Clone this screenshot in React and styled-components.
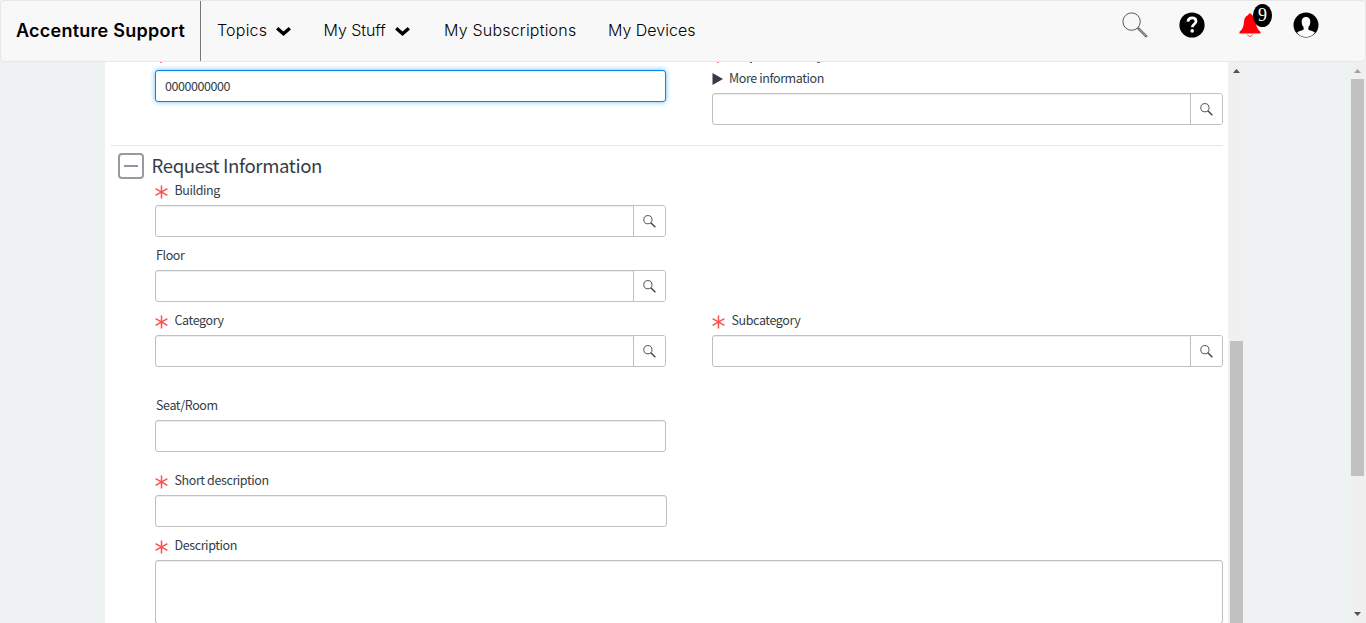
import React from 'react';
import styled, { createGlobalStyle } from 'styled-components';

const GlobalStyle = createGlobalStyle`
  *, *::before, *::after { box-sizing: border-box; }
  html, body { margin: 0; height: 100%; overflow: hidden; }
  body { font-family: "Noto Sans CJK JP", "Noto Sans", sans-serif; color: #343d47; background: #eef2f3; }
  svg { display: block; }
`;

const Page = styled.div`
  width: 1366px;
  height: 623px;
  display: flex;
  flex-direction: column;
  overflow: hidden;
`;

const Header = styled.header`
  flex: none;
  height: 62px;
  display: flex;
  border: 1px solid #e7e7e7;
  border-radius: 4px;
  background: #f8f8f8;
  font-family: Inter, "Liberation Sans", sans-serif;
  color: #000;
`;

const Brand = styled.div`
  width: 200px;
  padding-left: 15px;
  line-height: 59px;
  border-right: 1px solid #777;
  font-size: 18px;
  font-weight: 600;
  letter-spacing: 0.25px;
  white-space: nowrap;
`;

const Nav = styled.nav`
  flex: 1;
  display: flex;
  padding-left: 16px;
`;

const NavItem = styled.a`
  width: ${(p) => p.$width}px;
  display: flex;
  align-items: center;
  gap: 9px;
  height: 58px;
  font-size: 16px;
  font-weight: 300;
  letter-spacing: ${(p) => p.$spacing}px;
  white-space: nowrap;
  svg { margin-top: 3px; }
`;

const Tools = styled.div`
  display: flex;
  gap: 32px;
  padding: 11px 47px 0 0;
`;

const Tool = styled.span`
  position: relative;
  width: 25px;
  height: 26px;
  padding: ${(p) => p.$inset || '0'};
`;

const Badge = styled.span`
  position: absolute;
  left: 17px;
  top: -8px;
  width: 19px;
  height: 23px;
  border-radius: 50%;
  background: #000;
  color: #fff;
  font: 18px/22px "Liberation Serif", serif;
  text-align: center;
`;

const Body = styled.div`
  flex: 1;
  min-height: 0;
  display: flex;
`;

const Panel = styled.main`
  width: 1123px;
  margin-left: 105px;
  background: #fff;
  overflow: hidden;
`;

const ClippedRow = styled.div`
  height: 1px;
  display: flex;
  padding-left: 55px;
`;

const Mark = styled.i`
  width: ${(p) => p.$width}px;
  margin-left: ${(p) => p.$gap}px;
  background: ${(p) => p.$color};
`;

const Columns = styled.div`
  display: grid;
  grid-template-columns: 511px 511px;
  column-gap: 46px;
  padding-left: 50px;
  padding-top: ${(p) => p.$top || 0}px;
`;

const Field = styled.div`
  width: ${(p) => p.$width || 511}px;
`;

const Label = styled.label`
  display: flex;
  align-items: center;
  height: 25px;
  padding-bottom: 6px;
  padding-left: ${(p) => (p.$required ? 0 : 1)}px;
  font-size: 12.5px;
  line-height: 19px;
  letter-spacing: -0.4px;
  white-space: nowrap;
  svg { margin: 4px 6.5px 0 0; }
`;

const MoreInfo = styled.div`
  display: flex;
  align-items: center;
  height: 30px;
  gap: 6px;
  padding-bottom: 2px;
  font-size: 12.5px;
  letter-spacing: -0.4px;
  white-space: nowrap;
  svg { margin-top: 3px; }
`;

const Box = styled.div`
  display: flex;
  justify-content: flex-end;
  height: ${(p) => p.$height || 32}px;
  border: 1px solid #bdc0c4;
  border-radius: 3px;
  background: #fff;
  box-shadow: inset 0 1px 1px rgba(0, 0, 0, 0.075);
`;

const FocusedBox = styled(Box)`
  justify-content: flex-start;
  margin-top: 7px;
  padding-left: 9px;
  border-color: #0b86e8;
  box-shadow: inset 0 1px 1px rgba(0, 0, 0, 0.075), 0 0 5px rgba(16, 143, 240, 0.65);
  font-size: 12.5px;
  letter-spacing: -0.43px;
  line-height: 29px;
`;

const Lookup = styled.span`
  width: 32px;
  display: flex;
  align-items: center;
  justify-content: center;
  padding-right: 1px;
  border-left: 1px solid #bdc0c4;
  background: #fff;
  border-radius: 0 2px 2px 0;
`;

const Divider = styled.hr`
  height: 1px;
  margin: 20px 5px 0;
  border: 0;
  background: #e6e8ea;
`;

const SectionHead = styled.div`
  display: flex;
  align-items: center;
  gap: 8px;
  height: 34px;
  padding: 5px 0 0 12.5px;
`;

const Title = styled.h2`
  margin: 0 0 2px;
  font-size: 18.6px;
  line-height: 24px;
  font-weight: 400;
  letter-spacing: -0.38px;
  white-space: nowrap;
`;

const Toggle = styled.span`
  flex: none;
  width: 26px;
  height: 26px;
  display: flex;
  align-items: center;
  justify-content: center;
  border: 2px solid #959ba1;
  border-radius: 4px;
  &::before { content: ''; width: 14px; height: 2px; background: #8f959b; }
`;

const Rail = styled.div`
  width: 17px;
  display: flex;
  flex-direction: column;
  align-items: center;
  background: #f0f0f0;
  margin-left: ${(p) => p.$gap || 0}px;
`;

const Arrow = styled.svg`
  flex: none;
  margin: ${(p) => p.$margin};
`;

const Thumb = styled.div`
  width: 13px;
  height: ${(p) => p.$height}px;
  margin-top: ${(p) => p.$top}px;
  flex: none;
  background: #c1c1c1;
`;

const Chevron = () => (
  <svg width="15" height="11" viewBox="0 0 15 11">
    <path d="M1.2 2.3 7.5 7.8l6.3-5.5" fill="none" stroke="#000" strokeWidth="3.4" />
  </svg>
);

const Star = () => (
  <svg width="13" height="14" viewBox="0 0 13 14">
    <path d="M6.5.5v13M.6 3.7l11.8 6.6M12.4 3.7.6 10.3" stroke="#ff5050" strokeWidth="1.5" fill="none" />
  </svg>
);

const Glass = () => (
  <svg width="13" height="13" viewBox="0 0 13 13">
    <circle cx="4.9" cy="4.7" r="4.1" fill="none" stroke="#4b535b" strokeWidth="1" />
    <path d="m7.8 7.7 4.6 4.6" stroke="#3d464f" strokeWidth="1.4" />
  </svg>
);

const ScrollArrow = ({ down, color, margin }) => (
  <Arrow width="7" height="4" viewBox="0 0 7 4" $margin={margin}>
    <path d={down ? 'M0 0h7L3.5 4z' : 'M0 4h7L3.5 0z'} fill={color} />
  </Arrow>
);

const LookupBox = () => (
  <Box><Lookup><Glass /></Lookup></Box>
);

const FormField = ({ label, required, width, children }) => (
  <Field $width={width}>
    <Label $required={required}>{required && <Star />}{label}</Label>
    {children}
  </Field>
);

export default function App() {
  return (
    <Page>
      <GlobalStyle />
      <Header>
        <Brand>Accenture Support</Brand>
        <Nav>
          <NavItem $width={106.5} $spacing={0.2}>Topics <Chevron /></NavItem>
          <NavItem $width={120.5} $spacing={-0.05}>My Stuff <Chevron /></NavItem>
          <NavItem $width={164} $spacing={0.2}>My Subscriptions</NavItem>
          <NavItem $width={100} $spacing={0}>My Devices</NavItem>
        </Nav>
        <Tools>
          <Tool>
            <svg width="26" height="26" viewBox="0 0 26 26">
              <circle cx="9.6" cy="9.6" r="8.7" fill="none" stroke="#52585e" strokeWidth="1" />
              <path d="m15.8 15.9 9 9" stroke="#60676e" strokeWidth="2.6" />
              <path d="m16.6 16.7 7.5 7.5" stroke="#9fb4c4" strokeWidth="1" />
            </svg>
          </Tool>
          <Tool>
            <svg width="26" height="26" viewBox="0 0 26 26">
              <circle cx="13" cy="13" r="12.6" />
              <path d="M8.9 9.6C9.2 7 10.8 5.9 13.1 5.9c2.3 0 3.9 1.3 3.9 3.3 0 3-3.7 3.1-3.7 6" fill="none" stroke="#fff" strokeWidth="2.7" />
              <circle cx="13.2" cy="18.9" r="1.8" fill="#fff" />
            </svg>
          </Tool>
          <Tool $inset="1px 0 0 3px">
            <svg width="22" height="26" viewBox="0 0 22 26">
              <path d="M11 .5c1.100 0 1.700.600 1.800 1.400 2.600.8 3.900 3.300 4.200 6.700.4 4.800 1.100 7.600 4.500 10.200v1.700H.5v-1.700c3.400-2.600 4.100-5.400 4.500-10.200.3-3.400 1.600-5.900 4.200-6.700C9.300 1.100 9.900.5 11 .5z" fill="#ff0008" />
              <path d="M8.500 21.300a2.600 2.900 0 0 0 5 0" fill="#fff" stroke="#ff4a50" strokeWidth="1" />
            </svg>
            <Badge>9</Badge>
          </Tool>
          <Tool>
            <svg width="26" height="26" viewBox="0 0 26 26">
              <circle cx="13" cy="13" r="12.500" />
              <path d="M13 5c3 0 4.500 2.200 4.300 5.200-.1 2.300-.9 3.800-1.900 4.800v2.500c.8 1.200 5.200 1.300 6.600 3.300A12 12 0 0 1 13 25a12 12 0 0 1-9-4.200c1.400-2 5.800-2.100 6.600-3.300V15c-1-1-1.800-2.500-1.900-4.800C8.500 7.200 10 5 13 5z" fill="#fff" />
            </svg>
          </Tool>
        </Tools>
      </Header>
      <Body>
        <Panel>
          <ClippedRow>
            <Mark $width={2} $gap={0} $color="#ff8080" />
            <Mark $width={2} $gap={555} $color="#ff8080" />
            <Mark $width={2} $gap={31} $color="#55558a" />
            <Mark $width={3} $gap={65} $color="#66668f" />
          </ClippedRow>
          <Columns>
            <FocusedBox>0000000000</FocusedBox>
            <div>
              <MoreInfo>
                <svg width="11" height="12" viewBox="0 0 11 12"><path d="M.5 0 11 6 .5 12z" fill="#343d47" /></svg>
                More information
              </MoreInfo>
              <LookupBox />
            </div>
          </Columns>
          <Divider />
          <SectionHead><Toggle /><Title>Request Information</Title></SectionHead>
          <Columns>
            <FormField label="Building" required><LookupBox /></FormField>
          </Columns>
          <Columns $top={8}>
            <FormField label="Floor"><LookupBox /></FormField>
          </Columns>
          <Columns $top={8}>
            <FormField label="Category" required><LookupBox /></FormField>
            <FormField label="Subcategory" required><LookupBox /></FormField>
          </Columns>
          <Columns $top={28}>
            <FormField label="Seat/Room"><Box /></FormField>
          </Columns>
          <Columns $top={18}>
            <FormField label="Short description" required width={512}><Box /></FormField>
          </Columns>
          <Columns $top={8}>
            <FormField label="Description" required width={1068}><Box $height={64} /></FormField>
          </Columns>
        </Panel>
        <Rail>
          <ScrollArrow color="#505050" margin="7px 0 0" />
          <Thumb $top={268} $height={282} />
        </Rail>
        <Rail $gap={104}>
          <ScrollArrow color="#a3a3a3" margin="7px 0 0" />
          <Thumb $top={6} $height={397} />
          <ScrollArrow down color="#505050" margin="auto 0 7px" />
        </Rail>
      </Body>
    </Page>
  );
}
